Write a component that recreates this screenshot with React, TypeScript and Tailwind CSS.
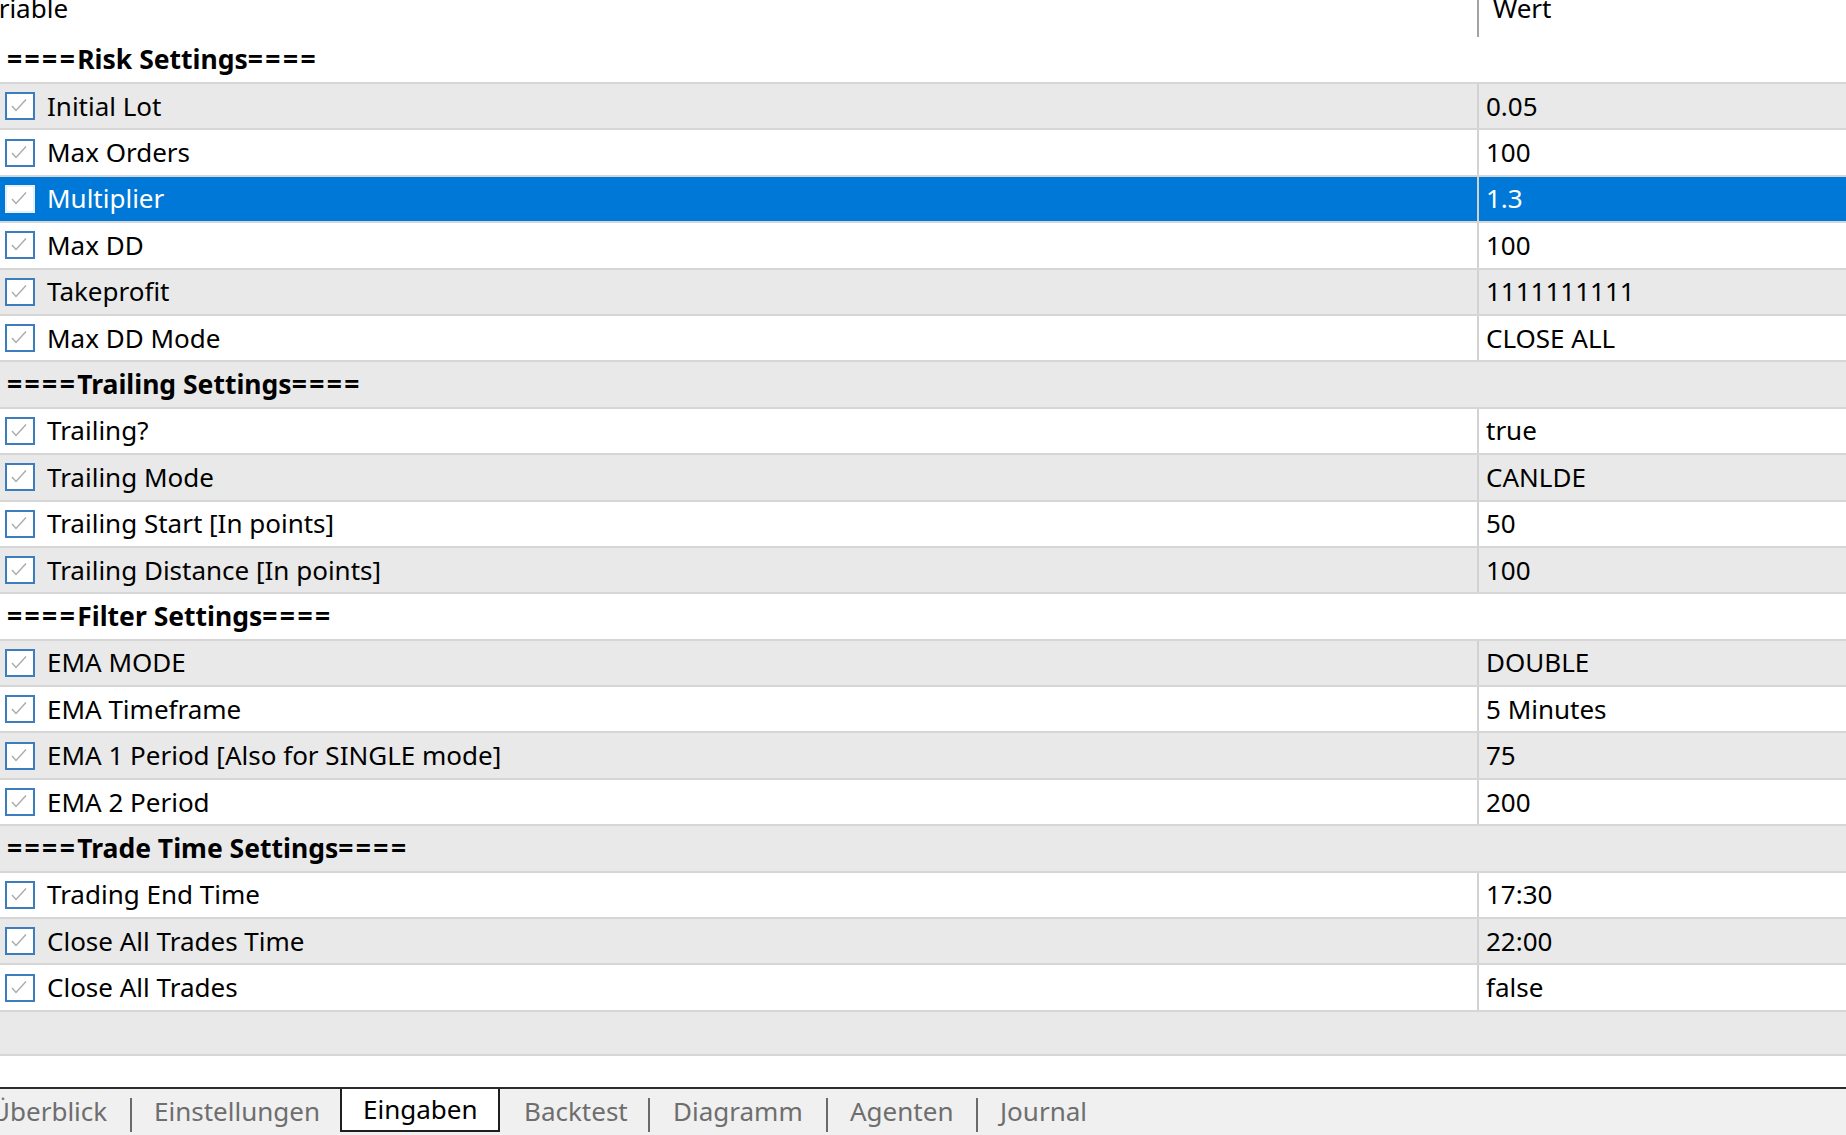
import React from 'react';

type Row =
  | { kind: 'group'; label: string }
  | { kind: 'item'; label: string; value: string; selected?: boolean };

const rows: Row[] = [
  { kind: 'group', label: 'Risk Settings' },
  { kind: 'item', label: 'Initial Lot', value: '0.05' },
  { kind: 'item', label: 'Max Orders', value: '100' },
  { kind: 'item', label: 'Multiplier', value: '1.3', selected: true },
  { kind: 'item', label: 'Max DD', value: '100' },
  { kind: 'item', label: 'Takeprofit', value: '1111111111' },
  { kind: 'item', label: 'Max DD Mode', value: 'CLOSE ALL' },
  { kind: 'group', label: 'Trailing Settings' },
  { kind: 'item', label: 'Trailing?', value: 'true' },
  { kind: 'item', label: 'Trailing Mode', value: 'CANLDE' },
  { kind: 'item', label: 'Trailing Start [In points]', value: '50' },
  { kind: 'item', label: 'Trailing Distance [In points]', value: '100' },
  { kind: 'group', label: 'Filter Settings' },
  { kind: 'item', label: 'EMA MODE', value: 'DOUBLE' },
  { kind: 'item', label: 'EMA Timeframe', value: '5 Minutes' },
  { kind: 'item', label: 'EMA 1 Period [Also for SINGLE mode]', value: '75' },
  { kind: 'item', label: 'EMA 2 Period', value: '200' },
  { kind: 'group', label: 'Trade Time Settings' },
  { kind: 'item', label: 'Trading End Time', value: '17:30' },
  { kind: 'item', label: 'Close All Trades Time', value: '22:00' },
  { kind: 'item', label: 'Close All Trades', value: 'false' },
];

const tabs = [
  { label: 'Überblick', cls: 'w-[141px] -ml-[9px]' },
  { label: 'Einstellungen', cls: 'w-[208px] pl-[22px]' },
  { label: 'Eingaben', active: true, cls: 'w-[160px] pl-[21px]' },
  { label: 'Backtest', cls: 'w-[150px] pl-[24px]' },
  { label: 'Diagramm', cls: 'w-[178px] pl-[23px]' },
  { label: 'Agenten', cls: 'w-[150px] pl-[22px]' },
  { label: 'Journal', cls: 'w-[150px] pl-[22px]' },
];

const CheckBox: React.FC<{ selected?: boolean }> = ({ selected }) => (
  <div
    className={
      'w-[30px] h-[28px] border-2 flex items-center justify-center shrink-0 bg-white ' +
      (selected ? 'border-[#e6eef7]' : 'border-[#3b7dbd]')
    }
  >
    <svg width="26" height="24" viewBox="0 0 26 24" fill="none">
      <polyline points="5,12 9,16.5 19,5.5" stroke="#ababab" strokeWidth="1.4" />
    </svg>
  </div>
);

export default function App() {
  return (
    <div
      className="w-[1846px] h-[1135px] overflow-hidden flex flex-col bg-white text-black text-[26px]"
      style={{ fontFamily: '"Noto Sans", "Open Sans", sans-serif' }}
    >
      {/* column header, scrolled so it is partly cut off */}
      <div className="h-[37px] flex shrink-0 overflow-hidden">
        <div className="w-[1477px] shrink-0 overflow-hidden">
          <div className="-ml-[31px] -mt-[5px] leading-[26px]">Variable</div>
        </div>
        <div className="w-[2px] bg-[#a3a3a3] shrink-0" />
        <div className="pl-[14px] -mt-[5px] leading-[26px]">Wert</div>
      </div>

      {rows.map((row, i) => {
        const bg = i % 2 === 1 ? 'bg-[#e9e9e9]' : 'bg-white';
        const border = i === 0 ? 'h-[45px]' : 'h-[46.4px] border-t-2 border-[#d6d6d6]';
        if (row.kind === 'group') {
          return (
            <div key={i} className={`${border} ${bg} shrink-0 flex items-center pl-[7px] font-bold text-[26.5px]`}>
              <span className="tracking-[2.4px]">====</span>
              <span>{row.label}</span>
              <span className="tracking-[2.4px]">====</span>
            </div>
          );
        }
        const sel = row.selected;
        return (
          <div
            key={i}
            className={`${border} shrink-0 flex ${sel ? 'bg-[#0078d7] text-white' : bg}`}
          >
            <div className="w-[1477px] shrink-0 flex items-center pl-[5px] gap-[12px]">
              <CheckBox selected={sel} />
              <span>{row.label}</span>
            </div>
            <div className="flex-1 flex items-center border-l-2 border-[#d2d2d2] pl-[7px]">
              {row.value}
            </div>
          </div>
        );
      })}

      <div className="h-[46.4px] shrink-0 border-t-2 border-b-2 border-[#d6d6d6] bg-[#e9e9e9]" />
      <div className="flex-1 bg-white" />

      {/* bottom tab strip */}
      <div className="h-[48px] shrink-0 bg-[#f0f0f0] border-t-2 border-[#2b2b2b] flex items-stretch">
        {tabs.map((t, i) => {
          const nextActive = tabs[i + 1]?.active;
          if (t.active) {
            return (
              <div
                key={t.label}
                className={`${t.cls} shrink-0 bg-white border-x-2 border-b-2 border-[#1f1f1f] flex items-center mb-[3px] text-black`}
              >
                {t.label}
              </div>
            );
          }
          const showSep = !nextActive && i < tabs.length - 1;
          return (
            <div key={t.label} className={`${t.cls} shrink-0 flex items-center justify-between text-[#6e6e6e]`}>
              <span className="leading-none -mt-[2px]">{t.label}</span>
              {showSep && <div className="w-[2px] h-[34px] bg-[#6a6a6a] mt-[6px]" />}
            </div>
          );
        })}
      </div>
    </div>
  );
}
